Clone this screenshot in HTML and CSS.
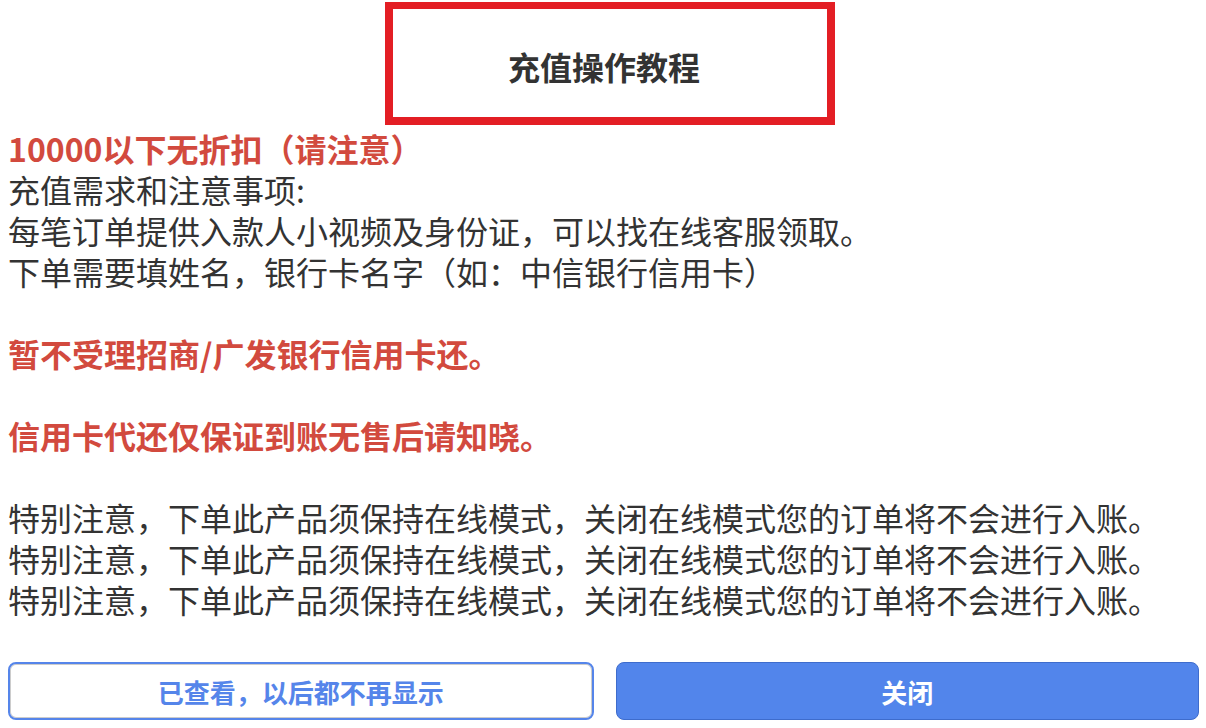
FILE: index.html
```html
<!DOCTYPE html>
<html lang="zh-CN">
<head>
    <meta charset="UTF-8">
    <meta name="viewport" content="width=device-width, initial-scale=1.0">
    <title>充值操作教程</title>
    <link rel="stylesheet" href="styles.css">
</head>
<body>
    <div class="notice">
        <div class="title-box">
            <h1>充值操作教程</h1>
        </div>
        <div class="content">
            <p class="warn">10000以下无折扣（请注意）</p>
            <p>充值需求和注意事项:</p>
            <p>每笔订单提供入款人小视频及身份证，可以找在线客服领取。</p>
            <p>下单需要填姓名，银行卡名字（如：中信银行信用卡）</p>
            <p class="blank"></p>
            <p class="warn">暂不受理招商/广发银行信用卡还。</p>
            <p class="blank"></p>
            <p class="warn">信用卡代还仅保证到账无售后请知晓。</p>
            <p class="blank"></p>
            <p>特别注意，下单此产品须保持在线模式，关闭在线模式您的订单将不会进行入账。</p>
            <p>特别注意，下单此产品须保持在线模式，关闭在线模式您的订单将不会进行入账。</p>
            <p>特别注意，下单此产品须保持在线模式，关闭在线模式您的订单将不会进行入账。</p>
        </div>
        <div class="button-row">
            <button class="button button-outline">已查看，以后都不再显示</button>
            <button class="button button-primary">关闭</button>
        </div>
    </div>
</body>
</html>
```

FILE: styles.css
```css
body {
    font-family: "Noto Sans CJK SC", "Noto Sans", sans-serif;
    margin: 0;
    padding: 0;
    background-color: #fff;
    color: #333;
}
.notice {
    width: 1206px;
    height: 728px;
    box-sizing: border-box;
    padding: 2px 7px 0 8px;
}
.title-box {
    width: 450px;
    height: 123px;
    box-sizing: border-box;
    margin-left: 377px;
    border: 8px solid #e31e24;
    border-top-width: 7px;
    display: flex;
    justify-content: center;
    align-items: center;
    padding: 6px 12px 0 0;
}
.title-box h1 {
    margin: 0;
    font-size: 32px;
    font-weight: 700;
    color: #333;
}
.content {
    margin-top: 3px;
}
.content p {
    margin: 0;
    font-size: 32px;
    line-height: 41px;
    height: 41px;
    white-space: nowrap;
}
.content .warn {
    color: #d24a3e;
    font-weight: 700;
}
.button-row {
    display: flex;
    gap: 22px;
    margin-top: 42px;
}
.button {
    flex: 1;
    height: 58px;
    border-radius: 8px;
    font-family: inherit;
    font-size: 26px;
    font-weight: 700;
    cursor: pointer;
}
.button-outline {
    background-color: #fff;
    color: #5585ea;
    border: 2px solid #5585ea;
    box-shadow: inset 0 0 0 1px #ccc;
}
.button-primary {
    background-color: #5285eb;
    color: #fff;
    border: 1px solid #3e6ccc;
}
```
